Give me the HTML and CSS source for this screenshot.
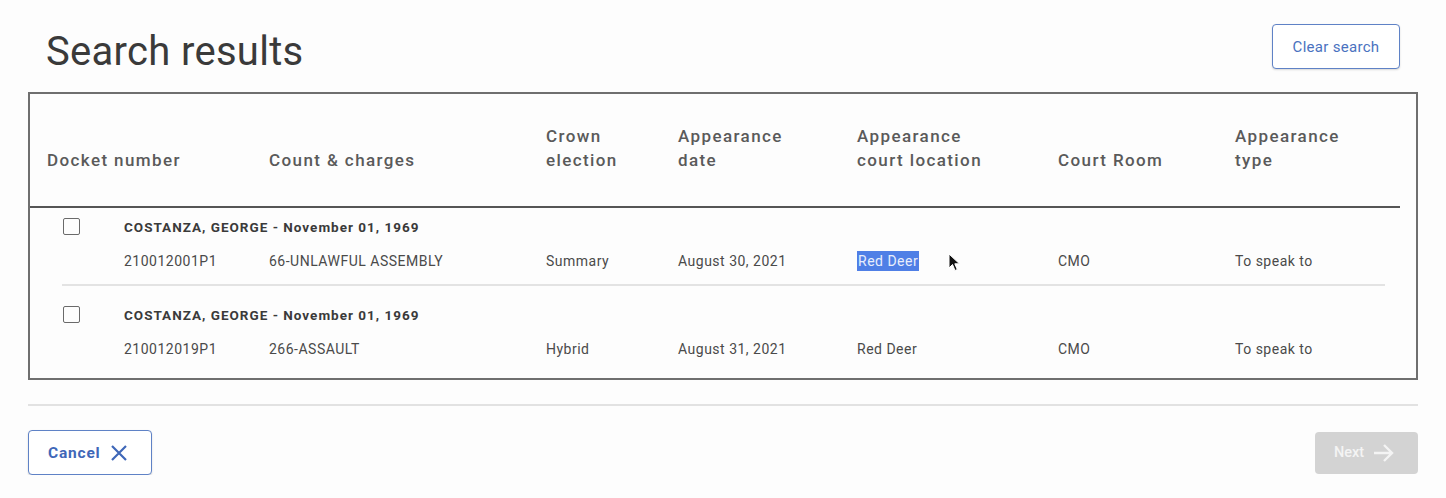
FILE: index.html
```html
<!DOCTYPE html>
<html>
<head>
<meta charset="utf-8">
<link rel="stylesheet" href="styles.css">
</head>
<body>
<div class="page">
  <div class="top">
    <h1 class="title">Search results</h1>
    <button class="btn-outline clear">Clear search</button>
  </div>

  <div class="table">
    <div class="thead grid">
      <div class="th">Docket number</div>
      <div class="th">Count &amp; charges</div>
      <div class="th">Crown<br>election</div>
      <div class="th">Appearance<br>date</div>
      <div class="th">Appearance<br>court location</div>
      <div class="th">Court Room</div>
      <div class="th">Appearance<br>type</div>
    </div>
    <div class="tbody">
      <div class="row sep">
        <div class="row-head"><span class="cb"></span><span class="name">COSTANZA, GEORGE - November 01, 1969</span></div>
        <div class="row-data grid">
          <div class="td first">210012001P1</div>
          <div class="td">66-UNLAWFUL ASSEMBLY</div>
          <div class="td">Summary</div>
          <div class="td">August 30, 2021</div>
          <div class="td loc"><span class="sel">Red Deer</span>
            <svg class="cursor" width="13" height="20" viewBox="0 0 13 20"><path d="M1 1 L1 15 L4.5 11.5 L7 17.5 L9.3 16.5 L6.8 10.8 L11.5 10.8 Z" fill="#111" stroke="#fff" stroke-width="1"/></svg>
          </div>
          <div class="td">CMO</div>
          <div class="td">To speak to</div>
        </div>
      </div>
      <div class="row">
        <div class="row-head"><span class="cb"></span><span class="name">COSTANZA, GEORGE - November 01, 1969</span></div>
        <div class="row-data grid">
          <div class="td first">210012019P1</div>
          <div class="td">266-ASSAULT</div>
          <div class="td">Hybrid</div>
          <div class="td">August 31, 2021</div>
          <div class="td">Red Deer</div>
          <div class="td">CMO</div>
          <div class="td">To speak to</div>
        </div>
      </div>
    </div>
  </div>

  <div class="divider"></div>

  <div class="actions">
    <button class="btn-outline cancel">Cancel
      <svg width="18" height="18" viewBox="0 0 18 18"><path d="M2 2 L16 16 M16 2 L2 16" stroke="#3f67b8" stroke-width="2.2" fill="none"/></svg>
    </button>
    <button class="btn-next">Next
      <svg width="21" height="18" viewBox="0 0 21 18"><path d="M1 9 H19 M11 1 L19 9 L11 17" stroke="#f4f4f4" stroke-width="2.4" fill="none"/></svg>
    </button>
  </div>
</div>
</body>
</html>
```

FILE: styles.css
```css
* { box-sizing: border-box; }
html, body { margin: 0; padding: 0; background: #fdfdfd; }
body { font-family: Roboto, "Liberation Sans", sans-serif; color: #444; }

.page { padding: 24px 28px 0 28px; }

.top {
  display: flex;
  justify-content: space-between;
  align-items: center;
  padding: 0 18px;
  height: 45px;
}
.title {
  margin: 0;
  font-size: 40px;
  font-weight: 400;
  color: #3a3a3a;
  line-height: 45px;
  letter-spacing: 0.3px;
  position: relative;
  top: 5px;
}

.btn-outline {
  background: #fff;
  border: 1.5px solid #5f82c6;
  border-radius: 4px;
  color: #4a72c0;
  font-family: Roboto, "Liberation Sans", sans-serif;
  box-shadow: 0 1px 2px rgba(0,0,0,0.15);
  cursor: pointer;
}
.clear {
  width: 128px;
  height: 45px;
  font-size: 15px;
  letter-spacing: 0.3px;
}

.table {
  margin-top: 23px;
  border: 2px solid #6f6f6f;
  height: 288px;
}
.grid {
  display: grid;
  grid-template-columns: 222px 277px 132px 179px 201px 177px 1fr;
}
.thead {
  padding: 30px 0 34px 17px;
  margin-right: 16px;
  border-bottom: 2px solid #555;
  align-items: end;
}
.th {
  font-size: 17px;
  font-weight: 500;
  color: #5a5a5a;
  line-height: 24px;
  letter-spacing: 1.4px;
}
.tbody {
  display: flex;
  flex-direction: column;
  gap: 10px;
}
.row {
  margin: 0 31px 0 32px;
  padding: 10px 0 14px 0;
}
.row.sep { border-bottom: 2px solid #e3e3e3; }
.row-head {
  display: flex;
  align-items: center;
  height: 18px;
}
.cb {
  width: 17px;
  height: 17px;
  border: 1.5px solid #6a6a6a;
  border-radius: 2px;
  margin-left: 1px;
  position: relative;
  top: -1px;
}
.name {
  margin-left: 44px;
  font-size: 13.5px;
  font-weight: 700;
  color: #3a3a3a;
  letter-spacing: 1px;
}
.row-data {
  margin-top: 16px;
  grid-template-columns: 207px 277px 132px 179px 201px 177px 1fr;
  line-height: 18px;
}
.td {
  font-size: 14px;
  color: #4a4a4a;
  letter-spacing: 0.5px;
}
.td.first { padding-left: 62px; }
.loc { position: relative; }
.sel {
  background: #4f7fe6;
  color: #e8eefc;
  padding: 2px 1px;
}
.cursor {
  position: absolute;
  left: 91px;
  top: 1px;
}

.divider {
  margin-top: 24px;
  height: 2px;
  background: #e2e2e2;
}

.actions {
  display: flex;
  justify-content: space-between;
  align-items: center;
  margin-top: 24px;
}
.cancel {
  width: 124px;
  height: 45px;
  display: flex;
  align-items: center;
  padding: 0 0 0 19px;
  gap: 10px;
  font-size: 15.5px;
  font-weight: 700;
  letter-spacing: 0.8px;
  color: #3f67b8;
}
.btn-next {
  width: 103px;
  height: 42px;
  background: #d3d3d3;
  border: none;
  border-radius: 4px;
  color: #f4f4f4;
  font-family: Roboto, "Liberation Sans", sans-serif;
  font-size: 14.5px;
  font-weight: 500;
  display: flex;
  align-items: center;
  padding: 0 0 0 19px;
  gap: 9px;
}
```
